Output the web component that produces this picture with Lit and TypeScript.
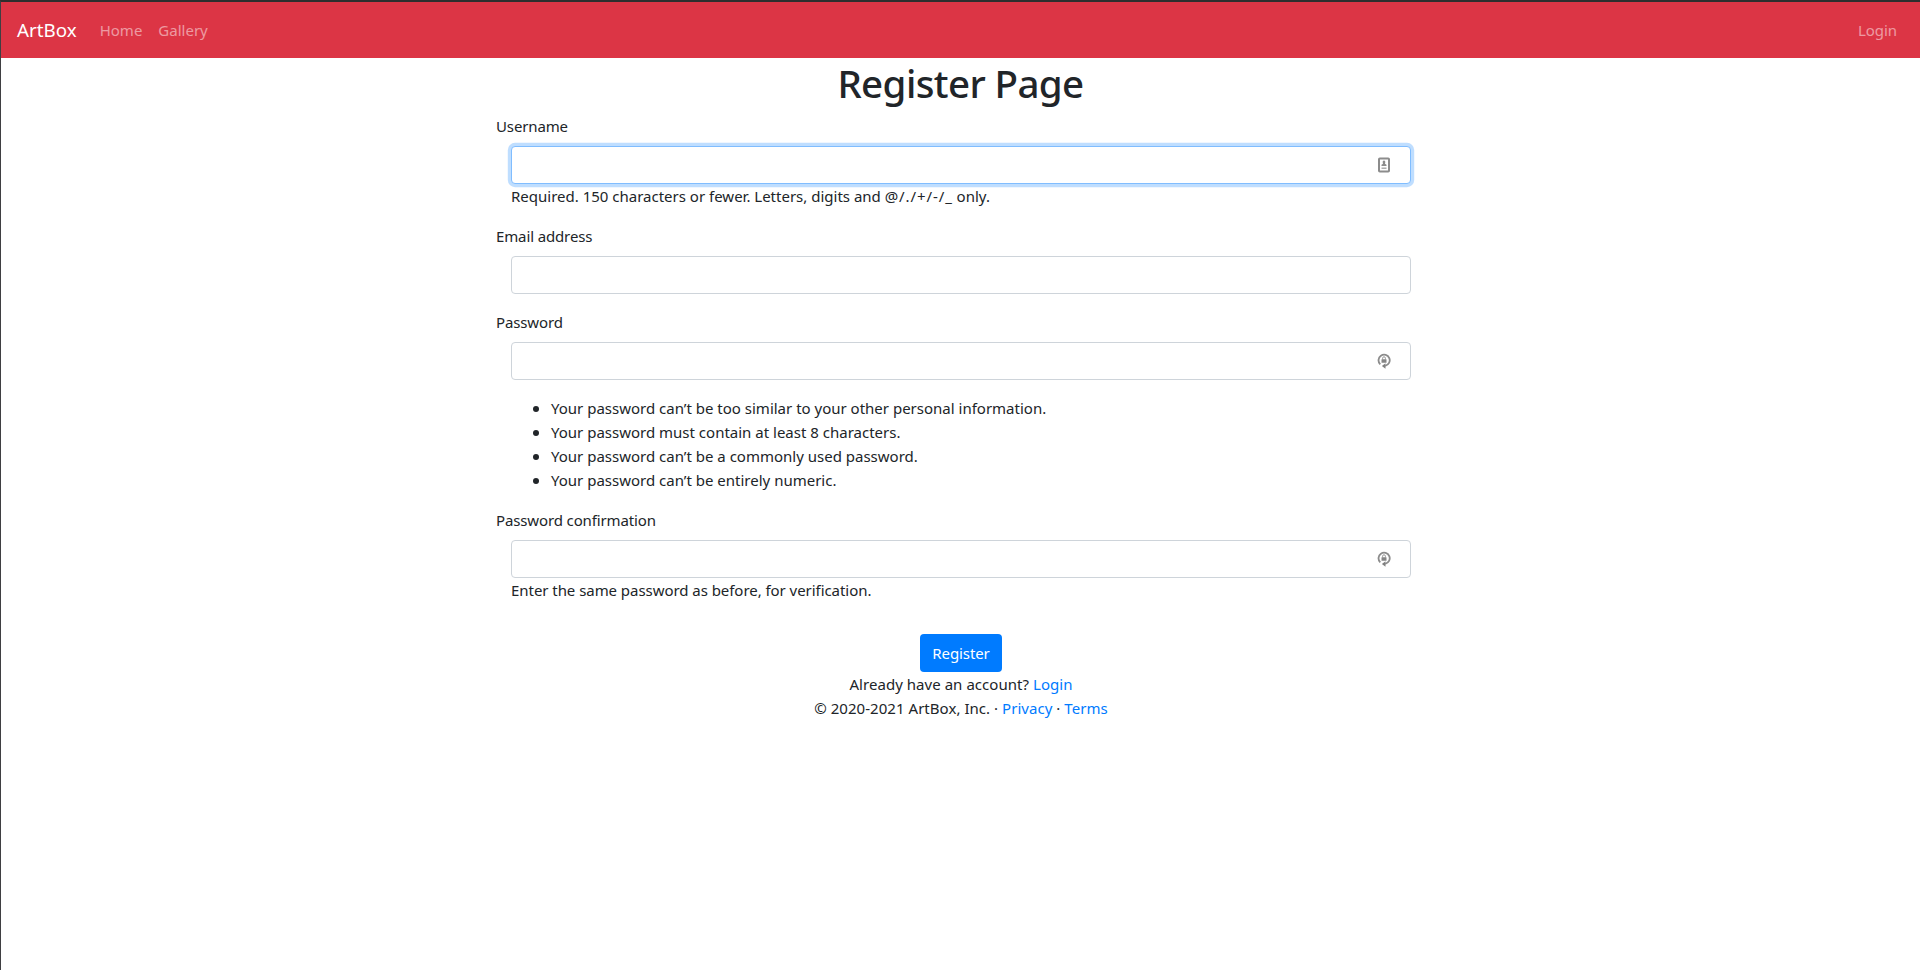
import { LitElement, html, css, svg, nothing } from "lit";
import { customElement, property } from "lit/decorators.js";

const contactIcon = svg`<svg class="icon" width="14" height="18" viewBox="0 0 14 18">
  <rect x="2" y="2.500" width="10" height="13" rx="0.800" fill="#fff" stroke="#8c8c8c" stroke-width="2"/>
  <path d="M7 4.600c1 0 1.300.9 1.300 1.700 0 .7-.3 1.100-.3 1.500l1.500.9v1.300h-5V8.700l1.500-.9c0-.4-.3-.8-.3-1.500 0-.8.3-1.700 1.300-1.700z" fill="#8c8c8c"/>
  <path d="M4.500 12.200h5" stroke="#a0a0a0" stroke-width="1.300"/>
</svg>`;

const lockIcon = svg`<svg class="icon" width="14" height="18" viewBox="0 0 14 18">
  <path d="M3.300 12.400A5.600 5.600 0 1 1 8.200 13.800" fill="none" stroke="#8c8c8c" stroke-width="1.800"/>
  <path d="M8.500 11.300v5.400L4.900 14z" fill="#808080"/>
  <path d="M5.600 7.400V6.200a1.400 1.400 0 0 1 2.800 0v1.200" fill="none" stroke="#999" stroke-width="1"/>
  <rect x="4.500" y="7.200" width="5" height="3.600" rx="0.400" fill="#858585"/>
</svg>`;

@customElement("form-field")
export class FormField extends LitElement {
  @property() label = "";
  @property() type = "text";
  @property() icon = "";
  @property({ type: Boolean }) active = false;

  static styles = css`
    :host { display: block; margin-bottom: 16px; }
    .label { display: block; margin-bottom: 8px; letter-spacing: -0.13px; }
    .body { padding: 0 15px; }
    .control {
      display: flex; align-items: center; box-sizing: border-box; height: 38px;
      padding: 0 19px 0 12px; background: #fff;
      border: 1px solid #ced4da; border-radius: 4px;
    }
    .control.active { border-color: #80bdff; box-shadow: 0 0 0 3.2px rgba(0, 123, 255, 0.25); }
    .input { flex: 1; min-width: 0; border: 0; outline: 0; padding: 0; background: none; font: inherit; color: #495057; }
    .icon { display: block; flex: none; }
  `;

  render() {
    return html`
      <label class="label" for="input">${this.label}</label>
      <div class="body">
        <div class="control ${this.active ? "active" : ""}">
          <input class="input" id="input" type=${this.type} />
          ${this.icon === "contact" ? contactIcon : this.icon === "lock" ? lockIcon : nothing}
        </div>
        <slot></slot>
      </div>
    `;
  }
}

@customElement("app-root")
export class AppRoot extends LitElement {
  static styles = css`
    :host {
      display: block; box-sizing: border-box; height: 970px; overflow: hidden;
      border-top: 2px solid #2e2e2e; border-left: 1px solid #3f3f42;
      background: #fff; color: #212529;
      font-family: "Segoe UI", "Noto Sans", sans-serif; font-size: 15px; line-height: 24px;
    }
    .nav { display: flex; align-items: center; height: 56px; box-sizing: border-box; padding: 0 15px 0 16px; background: #dc3545; }
    .brand { color: #fff; font-size: 18.800px; line-height: 30px; margin-right: 15px; text-decoration: none; }
    .nav-link { padding: 8px; color: rgba(255, 255, 255, 0.5); text-decoration: none; }
    .end { margin-left: auto; letter-spacing: -0.05px; }
    .title { margin: 0; padding: 1px 0 7px; font-size: 38.500px; line-height: 48px; font-weight: 500; letter-spacing: -0.6px; text-align: center; }
    .form { width: 930px; margin: 0 auto; padding-left: 1px; }
    .help { letter-spacing: -0.05px; }
    .symbols { letter-spacing: 0.9px; }
    .rules { margin: 16px 0; padding-left: 40px; list-style: none; }
    .rule { display: flex; align-items: center; }
    .rule::before {
      content: ""; flex: none; width: 6px; height: 6px; border-radius: 50%;
      margin: 2px 12px 0 -18px; background: #212529;
    }
    .footer { text-align: center; padding: 16px 0 0 1px; letter-spacing: 0.04px; }
    .btn {
      display: block; margin: 0 auto; width: 82px; height: 38px; padding: 0;
      border: 0; border-radius: 4px; background: #007bff; color: #fff; font: inherit; letter-spacing: -0.1px;
    }
    .link { color: #007bff; text-decoration: none; }
  `;

  render() {
    const rules = [
      "Your password can’t be too similar to your other personal information.",
      "Your password must contain at least 8 characters.",
      "Your password can’t be a commonly used password.",
      "Your password can’t be entirely numeric.",
    ];
    return html`
      <nav class="nav">
        <a class="brand" href="#">ArtBox</a>
        <a class="nav-link" href="#">Home</a>
        <a class="nav-link" href="#">Gallery</a>
        <a class="nav-link end" href="#">Login</a>
      </nav>
      <h1 class="title">Register Page</h1>
      <div class="form">
        <form-field label="Username" icon="contact" active>
          <div>Required. 150 characters or fewer. Letters, digits and <span class="symbols">@/./+/-/_</span> only.</div>
        </form-field>
        <form-field label="Email address" type="email"></form-field>
        <form-field label="Password" type="password" icon="lock">
          <ul class="rules">${rules.map((r) => html`<li class="rule">${r}</li>`)}</ul>
        </form-field>
        <form-field label="Password confirmation" type="password" icon="lock">
          <div class="help">Enter the same password as before, for verification.</div>
        </form-field>
      </div>
      <div class="footer">
        <button class="btn">Register</button>
        <div>Already have an account? <a class="link" href="#">Login</a></div>
        <div>© 2020-2021 ArtBox, Inc. · <a class="link" href="#">Privacy</a> · <a class="link" href="#">Terms</a></div>
      </div>
    `;
  }
}
